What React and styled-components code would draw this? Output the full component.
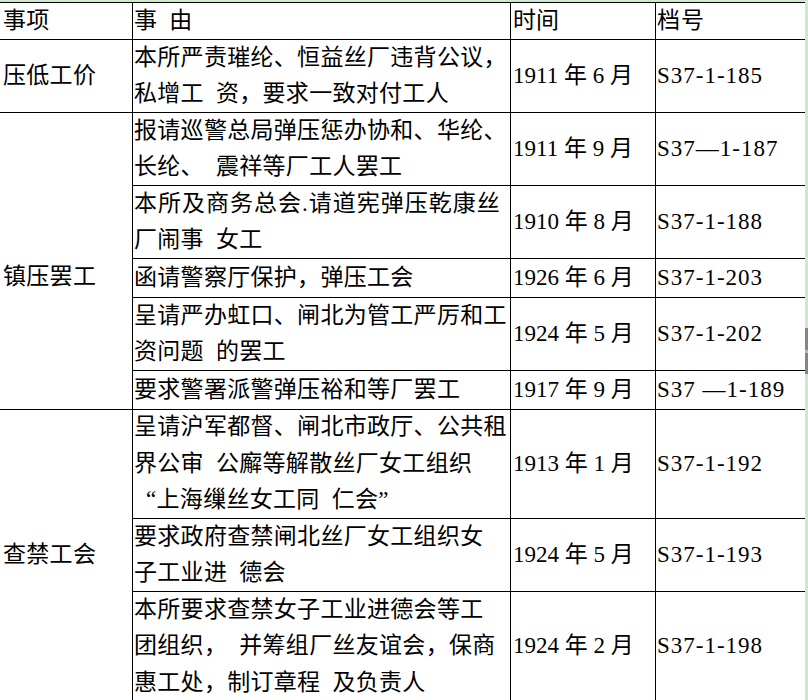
import React from "react";
import styled, { createGlobalStyle } from "styled-components";

const GlobalStyle = createGlobalStyle`
  html, body {
    margin: 0;
    padding: 0;
    background: #fff;
  }
  body {
    font-family: "Liberation Serif", "Noto Sans CJK SC", serif;
    color: #000;
  }
`;

const rows = [
  {
    topic: "压低工价",
    items: [
      {
        reason: [["本所严责璀纶、恒益丝厂违背公议，"], ["私增工 资，要求一致对付工人"]],
        date: "1911 年 6 月",
        file: "S37-1-185",
      },
    ],
  },
  {
    topic: "镇压罢工",
    shift: 32,
    items: [
      {
        reason: [["报请巡警总局弹压惩办协和、华纶、"], ["长纶、 震祥等厂工人罢工"]],
        date: "1911 年 9 月",
        file: "S37—1-187",
      },
      {
        reason: [["本所及商务总会.请道宪弹压乾康丝", 1], ["厂闹事 女工"]],
        date: "1910 年 8 月",
        file: "S37-1-188",
      },
      {
        reason: [["函请警察厅保护，弹压工会"]],
        date: "1926 年 6 月",
        file: "S37-1-203",
      },
      {
        reason: [["呈请严办虹口、闸北为管工严厉和工"], ["资问题 的罢工"]],
        date: "1924 年 5 月",
        file: "S37-1-202",
      },
      {
        reason: [["要求警署派警弹压裕和等厂罢工"]],
        date: "1917 年 9 月",
        file: "S37 —1-189",
      },
    ],
  },
  {
    topic: "查禁工会",
    items: [
      {
        reason: [
          ["呈请沪军都督、闸北市政厅、公共租"],
          ["界公审 公廨等解散丝厂女工组织"],
          [" “上海缫丝女工同 仁会”"],
        ],
        date: "1913 年 1 月",
        file: "S37-1-192",
      },
      {
        reason: [["要求政府查禁闸北丝厂女工组织女"], ["子工业进 德会"]],
        date: "1924 年 5 月",
        file: "S37-1-193",
      },
      {
        reason: [
          ["本所要求查禁女子工业进德会等工"],
          ["团组织， 并筹组厂丝友谊会，保商"],
          ["惠工处，制订章程 及负责人"],
        ],
        date: "1924 年 2 月",
        file: "S37-1-198",
      },
    ],
  },
];

// line-to-line heights of every row, header first
const rowHeights = [37, 73, 73, 73, 39, 73, 39, 109, 73, 110];

function Reason({ lines }) {
  return (
    <Lines>
      {lines.map(([text, spacing], i) => (
        <Line key={i} $spacing={spacing}>
          {text}
        </Line>
      ))}
    </Lines>
  );
}

function App() {
  return (
    <>
      <GlobalStyle />
      <Page>
        <Sheet>
          <Grid>
            <Cell $first>事项</Cell>
            <Cell $text>事 由</Cell>
            <Cell $date>时间</Cell>
            <Cell $file>档号</Cell>
            {rows.map((group) => (
              <React.Fragment key={group.topic}>
                <Cell $first $span={group.items.length} $shift={group.shift}>
                  {group.topic}
                </Cell>
                {group.items.map((item) => (
                  <React.Fragment key={item.file}>
                    <Cell $text>
                      <Reason lines={item.reason} />
                    </Cell>
                    <Cell $date>{item.date}</Cell>
                    <Cell $file>{item.file}</Cell>
                  </React.Fragment>
                ))}
              </React.Fragment>
            ))}
          </Grid>
          <ScrollThumb />
        </Sheet>
      </Page>
    </>
  );
}

const Page = styled.div`
  width: 808px;
  height: 700px;
  overflow: hidden;
  background: #cde8cd;
  padding-top: 2px;
  padding-right: 3px;
  box-sizing: border-box;
`;

const Sheet = styled.div`
  position: relative;
  background: #fff;
  height: 698px;
`;

const Grid = styled.div`
  display: grid;
  grid-template-columns: 132px 378px 145px 150px;
  grid-template-rows: ${rowHeights.map((h) => `${h}px`).join(" ")};
  font-size: 23px;
`;

const Cell = styled.div`
  box-sizing: border-box;
  border-top: 1px solid #000;
  border-left: ${(p) => (p.$first ? "none" : "1px solid #000")};
  grid-row: ${(p) => (p.$span ? `span ${p.$span}` : "auto")};
  display: flex;
  align-items: center;
  padding-left: ${(p) => (p.$first ? "3px" : p.$date ? "2px" : "1px")};
  padding-top: ${(p) => (p.$shift ? `${p.$shift}px` : "0")};
  white-space: pre;
  letter-spacing: ${(p) => (p.$date ? "0" : p.$file ? "1px" : "0.3px")};
  word-spacing: ${(p) => (p.$text ? "6px" : "0")};
  line-height: 36.5px;
`;

const Lines = styled.div`
  display: flex;
  flex-direction: column;
`;

const Line = styled.span`
  display: block;
  letter-spacing: ${(p) => (p.$spacing ? `${p.$spacing}px` : "0.3px")};
`;

const ScrollThumb = styled.div`
  position: absolute;
  right: -3px;
  top: 326px;
  width: 3px;
  height: 46px;
  background: #858585;
  &::after {
    content: "";
    position: absolute;
    left: 0;
    top: 22px;
    width: 3px;
    height: 3px;
    background: #b8b8b8;
  }
`;

export default App;
